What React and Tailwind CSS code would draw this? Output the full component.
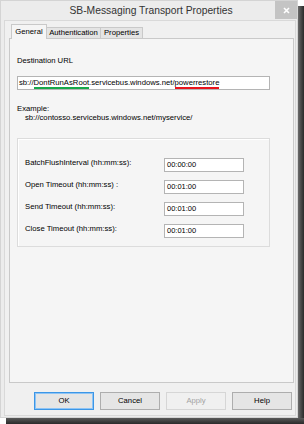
import React from "react";

const fields = [
  { label: "BatchFlushInterval (hh:mm:ss):", value: "00:00:00" },
  { label: "Open Timeout (hh:mm:ss) :", value: "00:01:00" },
  { label: "Send Timeout (hh:mm:ss):", value: "00:01:00" },
  { label: "Close Timeout (hh:mm:ss):", value: "00:01:00" },
];

const Button = ({ children, variant }) => {
  let cls = "border-[#adadad] bg-[#e5e5e5] text-black";
  if (variant === "default") cls = "border-[#3c96e6] bg-[#e5e5e5] text-black shadow-[inset_0_0_0_1px_#8ec4f5]";
  if (variant === "disabled") cls = "border-[#d6d6d6] bg-[#f0f0f0] text-[#a3a3a3]";
  return (
    <button className={`w-[60px] h-[18px] border flex items-center justify-center text-[7.7px] ${cls}`}>
      {children}
    </button>
  );
};

export default function App() {
  return (
    <div
      className="w-[304px] h-[424px] flex flex-col bg-white text-black"
      style={{ fontFamily: '"Liberation Sans", Arial, sans-serif' }}
    >
      <div className="flex flex-1 min-h-0">
        {/* Window */}
        <div className="w-[298px] h-[418px] flex flex-col bg-[#ececec] border border-[#d4d4d4]">
          {/* Title bar */}
          <div className="h-[19px] flex items-start">
            <div className="flex-1" />
            <div className="pt-[4px] pl-[4px] text-[10.3px] leading-[12px] text-[#333]">SB-Messaging Transport Properties</div>
            <div className="flex-1 flex justify-end">
              <div className="w-[22px] h-[18px] bg-[#c4c4c4] flex items-center justify-center">
                <svg width="7" height="7" viewBox="0 0 7 7">
                  <path d="M1 1L6 6M6 1L1 6" stroke="#fff" strokeWidth="1.6" />
                </svg>
              </div>
            </div>
          </div>

          {/* Client area */}
          <div className="flex-1 mx-[3px] mb-[1px] mr-[1px] bg-[#f0f0f0] border border-[#d9d9d9] flex flex-col pt-[3px]">
            {/* Tabs */}
            <div className="flex items-end pl-[6px] h-[15px] relative z-10">
              <div className="w-[36px] h-[15px] bg-[#f5f5f5] border border-b-0 border-[#c9c9c9] flex items-start justify-center pt-[2px] text-[7.7px] leading-[9px]">
                General
              </div>
              <div className="w-[54px] h-[12px] bg-[#e4e4e4] border border-l-0 border-[#c9c9c9] flex items-center justify-center text-[7.7px]">
                Authentication
              </div>
              <div className="w-[42px] h-[12px] bg-[#e4e4e4] border border-l-0 border-[#c9c9c9] flex items-center justify-center text-[7.7px]">
                Properties
              </div>
            </div>

            {/* Tab panel */}
            <div className="ml-[4px] w-[285px] h-[345px] -mt-[1px] bg-[#f5f5f5] border border-[#c9c9c9] flex flex-col px-[7px]">
              <div className="mt-[17px] text-[7.7px] leading-[10px]">Destination URL</div>
              <div className="mt-[10px] w-[253px] h-[14px] bg-white border border-[#b4b4b4] flex items-center pl-[1px] text-[7.7px]">
                <span>sb://</span>
                <span className="border-b-2 border-[#17a84a] leading-[8px] pt-[2px]">DontRunAsRoot</span>
                <span>.servicebus.windows.net/</span>
                <span className="border-b-2 border-[#e8141c] leading-[8px] pt-[2px]">powerrestore</span>
              </div>
              <div className="mt-[14px] text-[7.7px] leading-[9px]">Example:</div>
              <div className="pl-[8px] text-[7.7px] leading-[9px]">sb://contosso.servicebus.windows.net/myservice/</div>

              {/* Group box */}
              <div className="mt-[16px] w-[253px] h-[109px] border border-[#dcdcdc] shadow-[inset_1px_1px_0_#fff] flex flex-col pt-[19px] pl-[7px] gap-[8px]">
                {fields.map((f) => (
                  <div key={f.label} className="flex items-center h-[14px]">
                    <div className="w-[139px] text-[7.7px] -mt-[5px]">{f.label}</div>
                    <div className="w-[80px] h-[14px] bg-white border border-[#b4b4b4] flex items-center pl-[2px] text-[7.5px]">
                      {f.value}
                    </div>
                  </div>
                ))}
              </div>
            </div>

            {/* Buttons */}
            <div className="mt-[9px] flex justify-end gap-[6px] pr-[3px]">
              <Button variant="default">OK</Button>
              <Button>Cancel</Button>
              <Button variant="disabled">Apply</Button>
              <Button>Help</Button>
            </div>
          </div>
        </div>
        {/* Right shadow */}
        <div className="w-[6px] mt-[6px] bg-gradient-to-r from-[#6b6b6b] to-[#2a2a2a]" />
      </div>
      {/* Bottom shadow */}
      <div className="h-[6px] ml-[6px] bg-gradient-to-b from-[#5a5a5a] to-[#2a2a2a]" />
    </div>
  );
}
